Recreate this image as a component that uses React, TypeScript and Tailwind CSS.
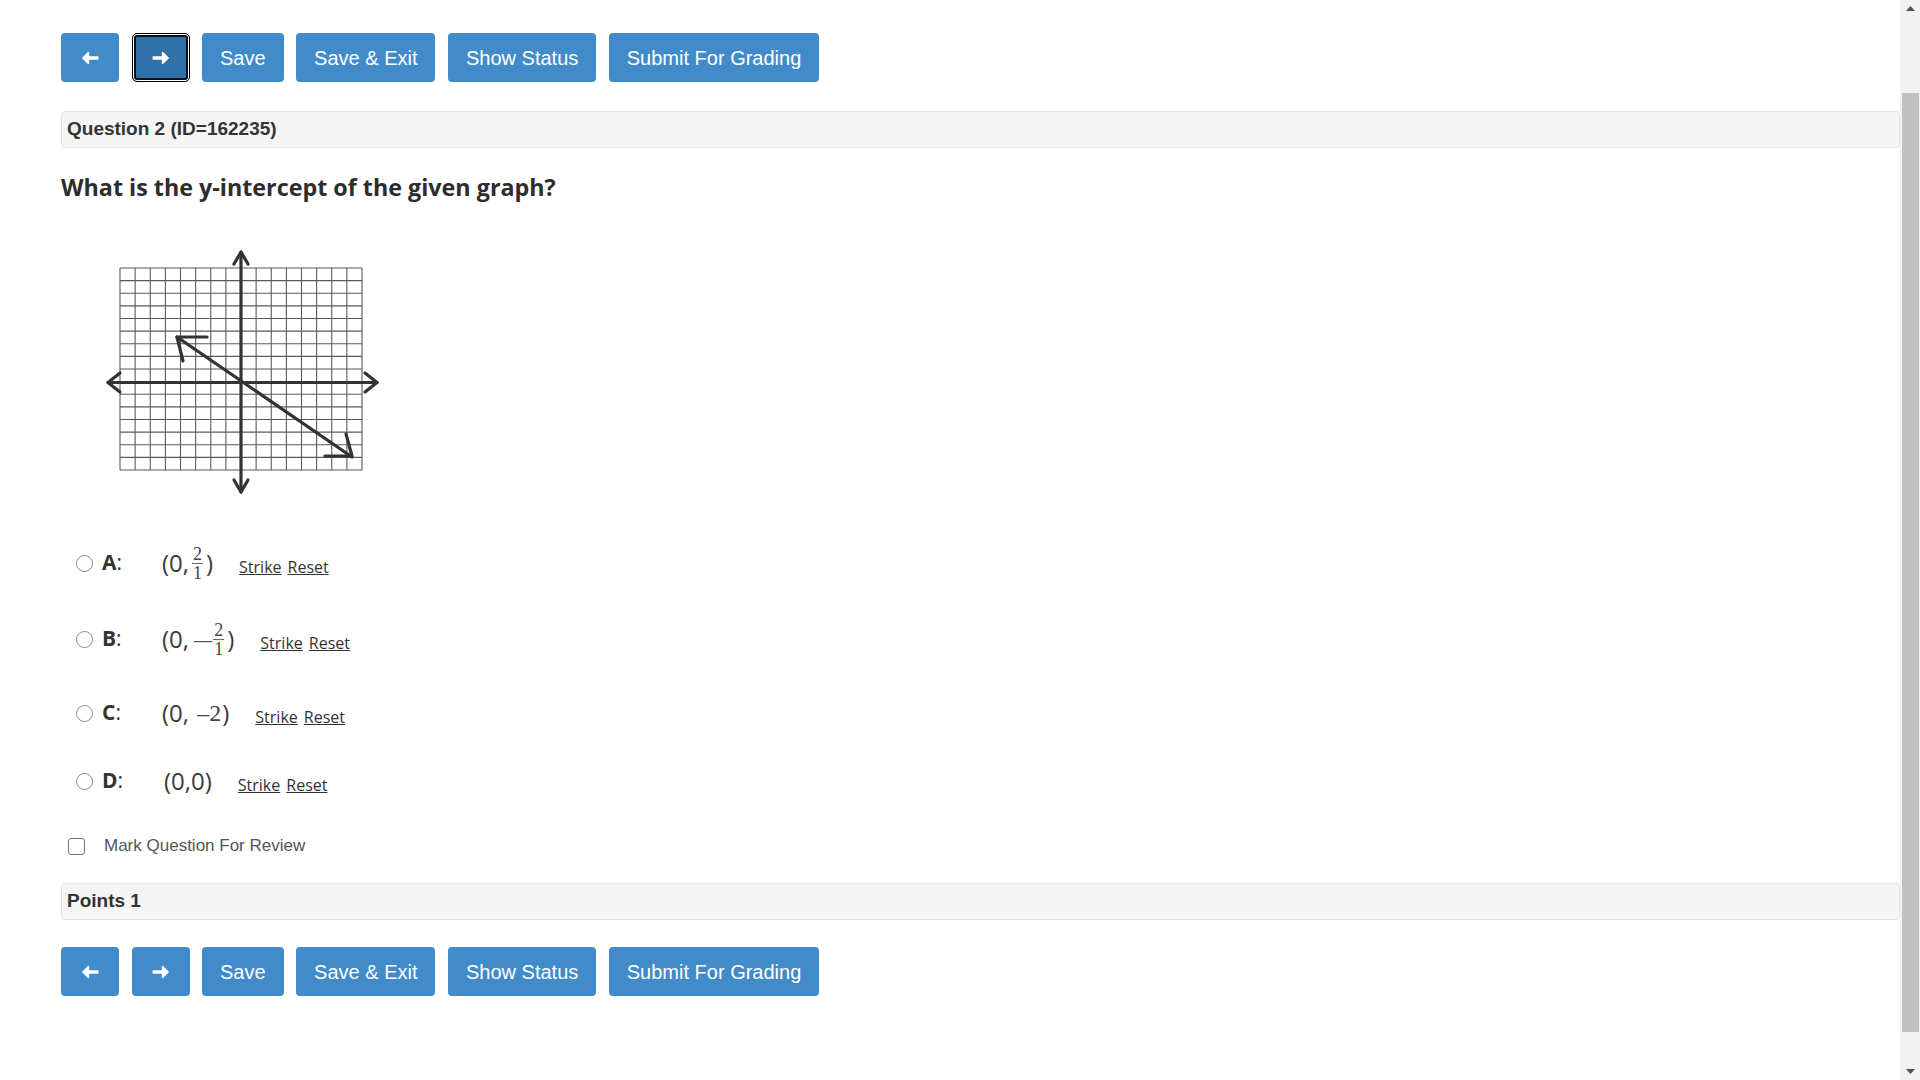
import React from "react";

const buttons = ["Save", "Save & Exit", "Show Status", "Submit For Grading"];

function Arrow({ dir }: { dir: "left" | "right" }) {
  return (
    <svg width="18" height="14" viewBox="0 0 18 14" className={dir === "left" ? "rotate-180" : ""}>
      <path d="M1.5 5.2h8.3V1.6c0-.7.8-1 1.3-.6l5.6 5.4c.4.3.4.9 0 1.2l-5.6 5.4c-.5.4-1.3.1-1.3-.6V8.8H1.5c-.6 0-1-.4-1-1V6.2c0-.6.4-1 1-1z" fill="#fff" />
    </svg>
  );
}

function Toolbar({ focused }: { focused?: boolean }) {
  return (
    <div className="flex gap-[12.5px] h-[49px] font-['Liberation_Sans',Arial,sans-serif] text-[20px] text-white">
      <button className="w-[58px] h-full rounded-[4px] bg-[#428bca] flex items-center justify-center">
        <Arrow dir="left" />
      </button>
      <button
        className={
          focused
            ? "w-[58px] h-full rounded-[5px] bg-[#3071a9] border border-black shadow-[inset_0_0_0_1px_#fff,inset_0_0_0_3px_#111] flex items-center justify-center"
            : "w-[58px] h-full rounded-[4px] bg-[#428bca] flex items-center justify-center"
        }
      >
        <Arrow dir="right" />
      </button>
      {buttons.map((b) => (
        <button key={b} className="h-full px-[18px] rounded-[4px] bg-[#428bca] leading-none">
          {b}
        </button>
      ))}
    </div>
  );
}

function Graph() {
  const cols = Array.from({ length: 17 }, (_, i) => 30 + i * 15.125);
  const rows = Array.from({ length: 17 }, (_, i) => 38 + i * 12.625);
  return (
    <svg width="320" height="270" viewBox="0 0 320 270">
      <g stroke="#5a5a5a" strokeWidth="1.1">
        {cols.map((x) => (
          <line key={"c" + x} x1={x} y1={38} x2={x} y2={240} />
        ))}
        {rows.map((y) => (
          <line key={"r" + y} x1={30} y1={y} x2={272} y2={y} />
        ))}
      </g>
      <g stroke="#333" strokeWidth="3.2" fill="none" strokeLinecap="round" strokeLinejoin="round">
        <line x1="151" y1="22" x2="151" y2="262" />
        <polyline points="144,34 151,22 158,34" />
        <polyline points="144,250 151,262 158,250" />
        <line x1="18" y1="152.5" x2="287" y2="152.5" />
        <polyline points="30,143 18,152.5 30,162" />
        <polyline points="275,143 287,152.5 275,162" />
        <line x1="87" y1="107" x2="262" y2="227" />
        <polyline points="117,107 87,107 93,131" />
        <polyline points="235,226 262,226 256,204" />
      </g>
    </svg>
  );
}

function Frac({ n, d }: { n: string; d: string }) {
  return (
    <span className="inline-flex flex-col items-center mx-[3px] font-['Liberation_Serif',serif] text-[18px] leading-[18px] text-[#444]">
      <span>{n}</span>
      <span className="w-[11px] h-px bg-[#666]" />
      <span>{d}</span>
    </span>
  );
}

function Choice({ letter, math, mt, h }: { letter: string; math: React.ReactNode; mt: string; h: string }) {
  return (
    <div className={`flex items-center pl-[15px] ${mt} ${h}`}>
      <span className="w-[17px] h-[17px] rounded-full border border-[#8a8a8a] bg-white" />
      <span className="ml-[9px] w-[60px] font-['Open_Sans',sans-serif] text-[21px] text-[#333]">
        <span className="font-bold">{letter}</span>:
      </span>
      <span className="flex items-center font-['Open_Sans',sans-serif] text-[24px] text-[#3a3a3a]">{math}</span>
      <span className="ml-[26px] mt-[8px] font-['Open_Sans',sans-serif] text-[16px] text-[#333] flex gap-[6px]">
        <span className="underline">Strike</span>
        <span className="underline">Reset</span>
      </span>
    </div>
  );
}

export default function App() {
  return (
    <div className="h-screen w-full flex overflow-hidden bg-white">
      <div className="flex-1 min-w-0 pt-[33px] pl-[61px]">
        <Toolbar focused />

        <div className="mt-[29px] h-[37px] flex items-center px-[5px] bg-[#f5f5f5] border border-[#e3e3e3] rounded-[4px] font-['Liberation_Sans',Arial,sans-serif] font-bold text-[19px] text-[#333]">
          Question 2 (ID=162235)
        </div>

        <h1 className="mt-[24px] h-[30px] leading-[30px] font-['Open_Sans',sans-serif] font-bold text-[23.3px] text-[#2d2d2d]">
          What is the y-intercept of the given graph?
        </h1>

        <div className="mt-[28px] ml-[29px]">
          <Graph />
        </div>

        <Choice
          letter="A"
          mt="mt-[43px]"
          h="h-[40px]"
          math={
            <>
              <span>(0,</span>
              <Frac n="2" d="1" />
              <span>)</span>
            </>
          }
        />
        <Choice
          letter="B"
          mt="mt-[36px]"
          h="h-[40px]"
          math={
            <>
              <span>(0,&nbsp;</span>
              <span className="font-['Liberation_Serif',serif] text-[#555] ml-[2px] mr-[1px] scale-x-150">–</span>
              <Frac n="2" d="1" />
              <span>)</span>
            </>
          }
        />
        <Choice
          letter="C"
          mt="mt-[34px]"
          h="h-[40px]"
          math={
            <>
              <span>(0,&nbsp;</span>
              <span className="font-['Liberation_Serif',serif] text-[#444] ml-[2px] mr-[1px]">–2</span>
              <span>)</span>
            </>
          }
        />
        <Choice
          letter="D"
          mt="mt-[28px]"
          h="h-[40px]"
          math={<span className="ml-[2px]">(0,0)</span>}
        />

        <div className="mt-[35px] h-[20px] flex items-center pl-[7px] font-['Liberation_Sans',Arial,sans-serif] text-[17px] text-[#555]">
          <span className="w-[17px] h-[17px] rounded-[3px] border border-[#767676] bg-white" />
          <span className="ml-[19px]">Mark Question For Review</span>
        </div>

        <div className="mt-[27px] h-[37px] flex items-center px-[5px] bg-[#f5f5f5] border border-[#e3e3e3] rounded-[4px] font-['Liberation_Sans',Arial,sans-serif] font-bold text-[19px] text-[#333]">
          Points 1
        </div>

        <div className="mt-[27px]">
          <Toolbar />
        </div>
      </div>

      <div className="w-[20px] h-full bg-[#f1f1f1] flex flex-col items-center">
        <div className="h-[17px] w-full flex items-center justify-center">
          <svg width="9" height="5" viewBox="0 0 9 5">
            <path d="M0 5 4.5 0 9 5z" fill="#505050" />
          </svg>
        </div>
        <div className="mt-[76px] h-[939px] w-[17px] ml-[1px] bg-[#c1c1c1]" />
        <div className="mt-auto h-[17px] w-full flex items-center justify-center">
          <svg width="9" height="5" viewBox="0 0 9 5">
            <path d="M0 0 4.5 5 9 0z" fill="#505050" />
          </svg>
        </div>
      </div>
    </div>
  );
}
